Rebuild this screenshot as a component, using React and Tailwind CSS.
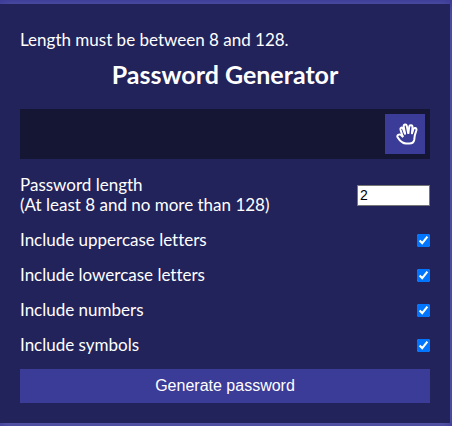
const options = [
  { id: "uppercase", label: "Include uppercase letters" },
  { id: "lowercase", label: "Include lowercase letters" },
  { id: "numbers", label: "Include numbers" },
  { id: "symbols", label: "Include symbols" },
];

function HandIcon() {
  return (
    <svg
      viewBox="0 0 22 22"
      className="size-[22px]"
      fill="none"
      stroke="currentColor"
      strokeWidth="2"
      strokeLinecap="round"
      strokeLinejoin="round"
      aria-hidden="true"
    >
      <path d="M6.6 13.4 L4.6 11.8 C3.2 10.8 0.6 12.2 1.6 14.2 C3 16.6 4.8 18.4 6.4 19.4 C7.4 20.1 8.6 20.4 10 20.4 H13.4 C16 20.4 17.8 19.4 18.2 17 L18.8 12.4 L20.4 7.2 C20.9 4.8 18 4.2 17.3 6.2 L16 10.2" />
      <path d="M6.6 13.4 L4.5 6.8 C3.9 4.6 6.3 3.8 7 5.6 L9 10.6" />
      <path d="M9 10.6 L7.7 3.8 C7.4 1.2 10.3 0.8 10.8 2.9 L12.2 10" />
      <path d="M12.4 10 L13.2 3.8 C13.5 1.6 16.6 1.8 16.5 4.2 L16 10.2" />
    </svg>
  );
}

export default function App() {
  return (
    <div className="bg-[#3b3b98] pt-1 pr-0.5 pb-[3px] font-['Lato','Liberation_Sans',sans-serif] text-[17px] leading-5 text-white [font-variant-ligatures:none]">
      <main className="bg-[#23235b] px-5 pt-[26px] pb-5 shadow-[0_2px_10px_rgba(255,255,255,0.2)]">
        <p>Length must be between 8 and 128.</p>
        <h1 className="mt-[9px] text-center text-[25px] leading-[30px] font-bold">Password Generator</h1>

        <div className="mt-5 flex h-[50px] items-center justify-end bg-[#151534] p-[5px]">
          <button type="button" aria-label="Copy password" className="flex size-10 items-center justify-center bg-[#3b3b98] pl-1">
            <HandIcon />
          </button>
        </div>

        <div className="mt-4 flex items-center justify-between">
          <label htmlFor="length">
            Password length
            <br />
            (At least 8 and no more than 128)
          </label>
          <input
            id="length"
            type="text"
            inputMode="numeric"
            defaultValue="2"
            className="h-[21px] w-[73px] border border-[#767676] bg-white px-0.5 font-['Liberation_Sans',Arial,sans-serif] text-[14px] text-black"
          />
        </div>

        {options.map(({ id, label }) => (
          <div key={id} className="mt-[15px] flex items-center justify-between">
            <label htmlFor={id}>{label}</label>
            <input id={id} type="checkbox" defaultChecked className="size-[13px]" />
          </div>
        ))}

        <button
          type="button"
          className="mt-3.5 block h-[34px] w-full bg-[#3b3b98] font-['Liberation_Sans',Arial,sans-serif] text-[16px]"
        >
          Generate password
        </button>
      </main>
    </div>
  );
}
